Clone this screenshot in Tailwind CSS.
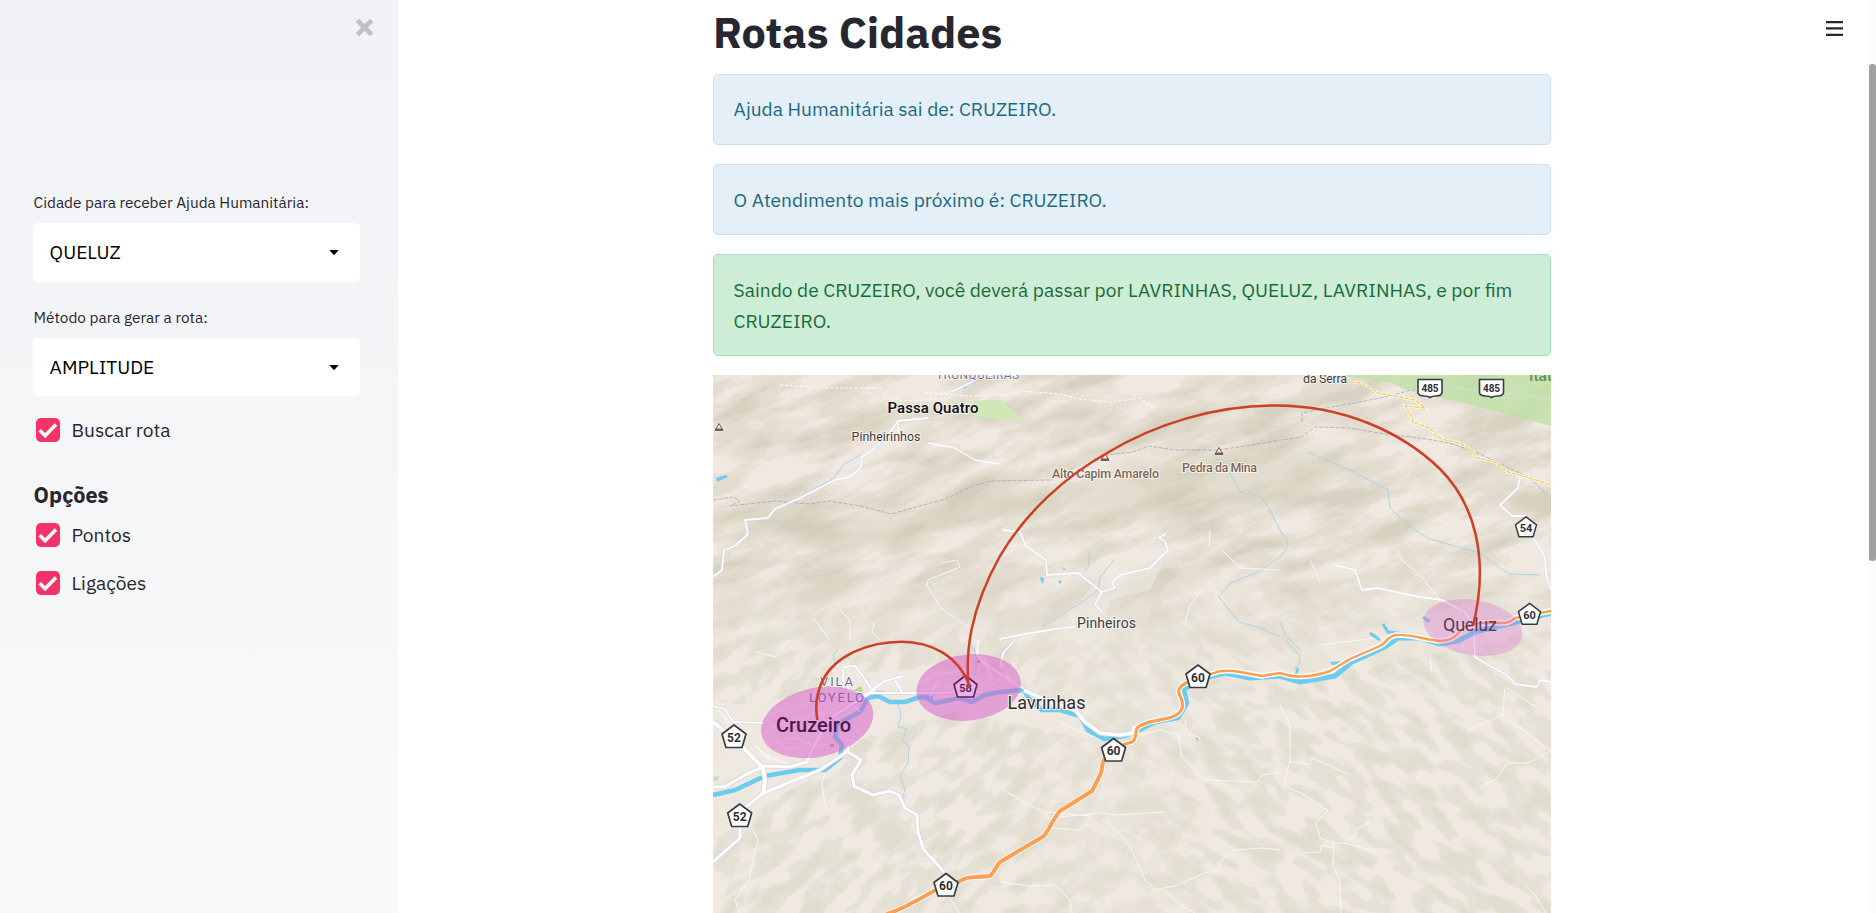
<!DOCTYPE html>
<html lang="pt-BR">
<head>
<meta charset="utf-8">
<title>Rotas Cidades</title>
<script src="https://cdn.jsdelivr.net/npm/@tailwindcss/browser@4"></script>
</head>
<body class="h-[913px] overflow-hidden bg-white font-['IBM_Plex_Sans',Roboto,sans-serif] text-[19.2px] leading-[30.72px] text-[#262730]">
<div class="flex h-full w-full">
  <aside class="relative flex h-full w-[398px] shrink-0 flex-col bg-linear-to-b from-[#f0f2f6] to-[#fafafa] pt-[190px] pr-[38px] pl-[33px]">
    <button class="absolute top-[18px] right-[24px]" aria-label="Fechar">
      <svg class="block size-[19px]" viewBox="0 0 19 19"><path d="M4 4 15 15M15 4 4 15" stroke="#bfc1c5" stroke-width="4.6" stroke-linecap="square"/></svg>
    </button>
    <label class="h-[33px] pl-[0.6px] text-[15.36px] leading-[25px]">Cidade para receber Ajuda Humanitária:</label>
    <div class="flex h-[59px] items-center justify-between rounded-[5px] bg-white pr-[21px] pl-[16.6px] text-black">
      <span>QUELUZ</span>
      <svg class="block h-[5px] w-[10px]" viewBox="0 0 10 5"><path d="M.3 0h9.4L6 4.3Q5 5.3 4 4.3Z"/></svg>
    </div>
    <label class="mt-[23px] h-[33px] pl-[0.6px] text-[15.36px] leading-[25px]">Método para gerar a rota:</label>
    <div class="flex h-[58px] items-center justify-between rounded-[5px] bg-white pr-[21px] pl-[16.6px] text-black">
      <span>AMPLITUDE</span>
      <svg class="block h-[5px] w-[10px]" viewBox="0 0 10 5"><path d="M.3 0h9.4L6 4.3Q5 5.3 4 4.3Z"/></svg>
    </div>
    <div class="mt-[22px] flex h-6 items-center gap-[11.5px] pl-[3px]">
      <svg class="block size-6 rounded-[5px] bg-[#f63366]" viewBox="0 0 24 24"><path d="m3.6 12.2 5.6 5.4L20 6.6" fill="none" stroke="#f4f5f8" stroke-width="3.6"/></svg>
      <span>Buscar rota</span>
    </div>
    <h3 class="mt-[37px] h-[44px] pl-[0.6px] text-[21.6px] font-bold leading-[32px]">Opções</h3>
    <div class="flex h-6 items-center gap-[11.5px] pl-[3px]">
      <svg class="block size-6 rounded-[5px] bg-[#f63366]" viewBox="0 0 24 24"><path d="m3.6 12.2 5.6 5.4L20 6.6" fill="none" stroke="#f4f5f8" stroke-width="3.6"/></svg>
      <span>Pontos</span>
    </div>
    <div class="mt-6 flex h-6 items-center gap-[11.5px] pl-[3px]">
      <svg class="block size-6 rounded-[5px] bg-[#f63366]" viewBox="0 0 24 24"><path d="m3.6 12.2 5.6 5.4L20 6.6" fill="none" stroke="#f4f5f8" stroke-width="3.6"/></svg>
      <span>Ligações</span>
    </div>
  </aside>

  <div class="flex h-full min-w-0 flex-1">
    <main class="flex flex-1 flex-col pl-[315px]">
      <h1 class="h-[74px] w-[838px] text-[43.2px] font-bold leading-[65px]">Rotas Cidades</h1>
      <div class="flex w-[838px] flex-col">
        <div class="mb-[19px] h-[71px] rounded-[5px] border border-[#cbe2f4] bg-[#e4eff8] px-[19.6px] pt-[19px] text-[#1c6983]">Ajuda Humanitária sai de: CRUZEIRO.</div>
        <div class="mb-[19px] h-[71px] rounded-[5px] border border-[#cbe2f4] bg-[#e4eff8] px-[19.6px] pt-[20px] text-[#1c6983]">O Atendimento mais próximo é: CRUZEIRO.</div>
        <div class="mb-[19px] h-[102px] rounded-[5px] border border-[#a5dfb9] bg-[#ceedd7] px-[19.6px] pt-[20px] text-[#176c36]">Saindo de CRUZEIRO, você deverá passar por LAVRINHAS, QUELUZ, LAVRINHAS, e por fim CRUZEIRO.</div>
        <svg class="block h-[538px] w-[838px] shrink-0 bg-[#efe9e1]" viewBox="713 375 838 538" font-family="Roboto, 'IBM Plex Sans', sans-serif">
          <defs>
            <filter id="reliefFar" x="0" y="0" width="1" height="1" color-interpolation-filters="sRGB">
              <feTurbulence type="fractalNoise" baseFrequency="0.013 0.042" numOctaves="4" seed="8"/>
              <feColorMatrix values="0 0 0 0 .80  0 0 0 0 .78  0 0 0 0 .70  1 0 0 0 0"/>
              <feComponentTransfer><feFuncA type="discrete" tableValues="0 0 0 0 0 0 0 0 .12 .24 .34 .4 .48 .6 .7 .7 .7 .7 .7 .7"/></feComponentTransfer>
            </filter>
            <filter id="reliefNear" x="0" y="0" width="1" height="1" color-interpolation-filters="sRGB">
              <feTurbulence type="fractalNoise" baseFrequency="0.03 0.062" numOctaves="2" seed="21"/>
              <feColorMatrix values="0 0 0 0 .81  0 0 0 0 .80  0 0 0 0 .72  1 0 0 0 0"/>
              <feComponentTransfer><feFuncA type="discrete" tableValues="0 0 0 0 0 0 0 0 0 .1 .27 .3 .34 .46 .46 .46 .46 .46 .46 .46"/></feComponentTransfer>
            </filter>
            <linearGradient id="fadeDown" x1="0" y1="375" x2="0" y2="913" gradientUnits="userSpaceOnUse">
              <stop offset="0" stop-color="#fff"/><stop offset=".35" stop-color="#fff"/><stop offset=".55" stop-color="#000"/>
            </linearGradient>
            <linearGradient id="fadeUp" x1="0" y1="375" x2="0" y2="913" gradientUnits="userSpaceOnUse">
              <stop offset=".33" stop-color="#000"/><stop offset=".55" stop-color="#fff"/>
            </linearGradient>
            <linearGradient id="fadeLeft" x1="0" y1="0" x2="1" y2="0"><stop offset=".35" stop-color="#000"/><stop offset=".6" stop-color="#fff"/></linearGradient>
            <linearGradient id="fadeRight" x1="0" y1="0" x2="1" y2="0"><stop offset=".35" stop-color="#fff"/><stop offset=".6" stop-color="#000"/></linearGradient>
            <mask id="far" maskUnits="userSpaceOnUse" x="713" y="375" width="838" height="538"><rect x="713" y="375" width="838" height="538" fill="url(#fadeDown)"/></mask>
            <mask id="near" maskUnits="userSpaceOnUse" x="713" y="375" width="838" height="538"><rect x="713" y="375" width="838" height="538" fill="url(#fadeUp)"/></mask>
            <mask id="west" maskUnits="userSpaceOnUse" x="713" y="375" width="838" height="538"><rect x="713" y="375" width="838" height="538" fill="url(#fadeRight)"/></mask>
            <mask id="east" maskUnits="userSpaceOnUse" x="713" y="375" width="838" height="538"><rect x="713" y="375" width="838" height="538" fill="url(#fadeLeft)"/></mask>
            <filter id="soft" x="-.3" y="-.3" width="1.6" height="1.6"><feGaussianBlur stdDeviation="7"/></filter>
            <path id="pentagon" d="M0-12 12-3 8 10.5H-8L-12-3Z" fill="#fff" stroke="#3a3b40" stroke-width="1.7" stroke-linejoin="round"/>
            <path id="plate" d="M-12-8.500H12V5Q11 8 6 8 2 8 0 9.500 -2 8-6 8-11 8-12 5Z" fill="#fff" stroke="#3a3b40" stroke-width="1.600" stroke-linejoin="round"/>
            <path id="peak" d="M0-3.500 4 3.500H-4Z" fill="#f6efe6" stroke="#7a5a48" stroke-width="1"/>
          </defs>

          <!-- terrain -->
          <g fill="#d2ccb6" opacity=".42" filter="url(#soft)">
            <path d="M713 510 760 507 890 514 960 485 1000 482 1080 495 1130 455 1190 470 1240 440 1310 450 1350 445 1330 490 1270 505 1200 500 1140 520 1060 510 990 515 900 545 830 545 780 530 713 530Z"/>
            <path d="M1410 455 1440 470 1430 495 1412 480Z"/>
          </g>
          <g mask="url(#far)"><g transform="rotate(-18 1132 500)"><rect x="640" y="150" width="990" height="750" filter="url(#reliefFar)"/></g></g>
          <g mask="url(#near)">
            <g mask="url(#west)"><g transform="rotate(-42 1000 780)"><rect x="500" y="400" width="950" height="800" filter="url(#reliefNear)"/></g></g>
            <g mask="url(#east)"><g transform="rotate(32 1330 780)"><rect x="850" y="350" width="950" height="850" filter="url(#reliefNear)"/></g></g>
          </g>
          <g fill="#efe9e1">
            <path d="M713 780 713 700 745 705 800 695 860 672 960 668 1010 690 1075 715 1090 740 1020 725 960 712 900 720 860 740 820 775 770 800 730 830 713 840Z" opacity=".85"/>
            <path d="M1070 610 1110 570 1150 545 1165 560 1150 590 1110 600 1100 640 1060 640Z" opacity=".6"/>
            <path d="M1330 640 1420 615 1500 595 1551 600 1551 630 1430 655 1300 680 1200 690Z" opacity=".5"/>
          </g>

          <!-- parks -->
          <path d="M1341 375H1551V426L1480 407 1410 391 1390 383Z" fill="#bfe0a6" opacity=".82"/>
          <path d="M974 401 1001 400 1021 418 998 419 974 417Z" fill="#cfe8b5"/>
          <path d="M854 690 861 686 863 691 855 695Z" fill="#a9dd8d"/>
          <path d="M713 777 719 776 718 780 713 781Z" fill="#c9dda8"/>

          <!-- borders -->
          <g fill="none" stroke="#9da0b5" stroke-width=".9" stroke-dasharray="4 1.500" opacity=".8">
            <path d="M713 500 733 497 740 501 730 506 775 501 808 504 830 501 860 506 891 514 945 499 975 485 991 481 1050 480 1075 467M1105 455 1133 452 1149 446 1175 450 1218 450 1245 446 1275 441 1302 437 1315 427 1350 428 1385 434 1420 438 1450 443 1480 454 1505 466 1530 478 1547 495"/>
            <path d="M1302 422V413L1320 409 1355 403 1385 397 1415 389"/>
          </g>
          <g fill="none" stroke="#fbf8f8" stroke-width="1.200" stroke-dasharray="3 2">
            <path d="M780 385 830 388 880 388 886 398 910 401 945 398M925 393 970 396 1003 395 1022 391 1060 394 1080 399 1110 402 1140 398 1155 410"/>
            <path d="M1410 390 1440 385 1480 391 1551 398" stroke="#d9dfe0"/>
          </g>

          <!-- streams -->
          <g fill="none" stroke="#a3d3e6" stroke-width=".9">
            <path d="M808 493 835 477 843 465 860 455"/>
            <path d="M1212 455 1225 465 1240 492 1262 497 1270 510 1281 532 1288 540 1286 550 1280 557 1258 572 1230 583 1219 597 1225 605 1239 622 1260 628 1280 637"/>
            <path d="M1308 452 1350 470 1388 490 1390 508 1410 527 1430 539 1480 553 1500 568 1510 574 1540 575"/>
            <path d="M1042 627 1065 613 1085 600 1098 590 1100 577 1114 560M1089 552 1089 566 1084 572"/>
            <path d="M898 704 901 715 898 727 907 729 903 740 909 747 908 763 900 775 905 790 902 800 907 795"/>
            <path d="M1286 641 1294 650 1300 655 1299 665 1295 668 1299 676"/>
            <path d="M838 649 833 655 836 668"/>
            <path d="M1280 622 1286 636 1300 650"/>
          </g>
          <g fill="#6ccbee">
            <path d="M716 478 726 475 728 477 717 482ZM962 385 967 387 964 389ZM1040 577 1044 578 1043 584 1041 581ZM1058 580 1062 581 1060 584ZM1062 567 1066 569 1064 570ZM1195 737 1198 738 1198 742Z"/>
            <path d="M1330 662 1342 661 1339 665 1332 665Z"/>
          </g>

          <!-- country lanes -->
          <g fill="none" stroke="#f9f7f5" stroke-width="1" stroke-linejoin="round">
            <path d="M927 585 928 580 945 573 960 567 957 560 942 563M927 585 941 608 975 632M875 622 872 632 880 640M813 618 830 640M840 610 850 620 850 640"/>
            <path d="M1003 790 1012 795 1030 806 1045 812 1049 818 1100 813 1116 815 1165 812M1102 818 1118 832 1132 850 1145 880 1155 890 1175 886 1205 873 1218 870 1220 862 1234 850 1262 848 1280 850M1165 889 1180 905 1195 913M1045 812 1090 816 1080 830 1050 828"/>
            <path d="M1000 882 1030 886 1055 885 1070 900 1072 913"/>
            <path d="M1060 722 1100 740M1185 720 1187 733 1200 738M1140 735 1160 730 1179 735 1181 755 1203 780 1258 782 1262 775 1280 772"/>
            <path d="M1280 705 1290 725 1290 760 1284 785 1305 795 1328 811 1316 823 1320 838 1334 843 1345 843 1356 835 1355 830 1370 822M1334 843 1333 865 1340 880 1341 913M1345 843 1378 852M1290 762 1310 764 1312 758 1350 775M1302 853 1320 852 1322 845 1334 848"/>
            <path d="M1505 687 1503 715 1480 725 1466 731M1507 688 1540 710M1510 720 1551 751 1528 763 1507 763 1498 778 1480 787M1524 883 1535 895 1546 913"/>
            <path d="M1430 655 1432 673M1383 637 1320 645M750 825 758 840 749 880 735 900 740 913M825 770 822 785 826 810"/>
            <path d="M1400 550 1397 556 1420 575 1440 600M1320 582 1310 560M1200 592 1190 605 1185 625M1210 530 1209 547M1222 550 1240 568 1280 570"/>
            <path d="M755 652 775 657 790 640M910 900 940 885 960 913"/>
          </g>

          <!-- yellow road -->
          <path d="M1350 382 1362 383 1378 393 1400 397 1415 400 1425 408 1405 406 1413 418 1412 422 1430 428 1436 436 1445 440 1460 443 1474 452 1474 457 1495 462 1508 472 1530 478 1551 485" fill="none" stroke="#fff" stroke-width="2.600"/>
          <path d="M1350 382 1362 383 1378 393 1400 397 1415 400 1425 408 1405 406 1413 418 1412 422 1430 428 1436 436 1445 440 1460 443 1474 452 1474 457 1495 462 1508 472 1530 478 1551 485" fill="none" stroke="#f6cc5c" stroke-width="1.400" stroke-dasharray="5 .8" stroke-linejoin="round"/>

          <!-- white roads -->
          <g fill="none" stroke-linejoin="round" stroke-linecap="round">
            <g stroke="#d3d3e4" stroke-width="2.600">
              <path d="M713 577 722 570 724 550 735 546 748 534 745 520 768 518 775 509 800 498 835 480 850 477 861 467 862 457 875 448 890 432 898 421 928 418M950 392 960 388 975 380"/>
              <path d="M1003 530 1020 532 1026 546 1046 560 1047 575 1078 573 1102 592 1095 604 1102 612M1000 639 1020 635 1055 629 1075 627M1102 592 1115 588 1112 583 1120 575 1150 568 1168 550 1165 541 1159 538 1165 534"/>
              <path d="M1334 565 1355 570 1362 590 1378 588 1400 593 1420 597 1442 600 1465 612 1474 625"/>
              <path d="M1520 477 1518 488 1500 505 1512 516 1525 516 1530 532 1545 557 1546 575 1551 590"/>
              <path d="M1474 632 1475 657 1490 666 1507 675 1515 684 1537 687 1540 680 1551 682"/>
              <path d="M1000 655 1003 650 1013 642"/>
            </g>
            <g stroke="#fdfdff" stroke-width="1.800">
              <path d="M713 577 722 570 724 550 735 546 748 534 745 520 768 518 775 509 800 498 835 480 850 477 861 467 862 457 875 448 890 432 898 421 928 418M950 392 960 388 975 380"/>
              <path d="M898 421V432M928 443 955 448 975 460 1000 464" stroke-width="1.300"/>
              <path d="M1003 530 1020 532 1026 546 1046 560 1047 575 1078 573 1102 592 1095 604 1102 612M1000 639 1020 635 1055 629 1075 627M1102 592 1115 588 1112 583 1120 575 1150 568 1168 550 1165 541 1159 538 1165 534"/>
              <path d="M1334 565 1355 570 1362 590 1378 588 1400 593 1420 597 1442 600 1465 612 1474 625"/>
              <path d="M1520 477 1518 488 1500 505 1512 516 1525 516 1530 532 1545 557 1546 575 1551 590"/>
              <path d="M1474 632 1475 657 1490 666 1507 675 1515 684 1537 687 1540 680 1551 682"/>
            </g>
          </g>

          <!-- rivers -->
          <g fill="none" stroke="#6ccbee" stroke-linejoin="round">
            <path d="M713 795 735 790 765 776 800 770 825 770 840 758 842 745 835 737 837 724 860 712 868 698 878 696 890 702 905 702 920 697 933 698" stroke-width="4.500"/>
            <path d="M925 697 935 703 960 698 972 702 985 695 1000 692 1024 690 1030 700 1042 710 1060 710 1080 716 1088 730 1104 739 1125 736 1140 730 1155 722 1178 718 1187 703 1184 690 1192 684" stroke-width="4.500"/>
            <path d="M1208 677 1225 673 1250 678 1280 676 1300 682 1335 676 1352 662 1385 647 1398 638 1420 638 1440 644 1458 641 1475 632 1500 626 1525 620 1551 613" stroke-width="5"/>
            <path d="M1392 640 1406 634 1388 632 1383 624M1380 640 1370 633M1423 617 1428 621 1430 620" stroke-width="3"/>
            <path d="M1296 675 1298 668" stroke-width="2.500"/>
          </g>

          <!-- town streets -->
          <g fill="none" stroke="#fdfbff" stroke-width="1.100" opacity=".9">
            <path d="M765 715 800 706 840 694M768 730 790 720 830 712 850 700M765 742 795 738 820 748M775 750 830 744M785 722 798 738M800 715 812 732M815 708 828 724M770 735 790 752M830 712 848 728M845 697 860 712M755 745 770 760M766 755 790 765M725 716 735 730M719 710 728 724M840 738 858 742"/>
            <path d="M920 683 935 675 970 668M930 697 938 680M970 660 968 690M985 658 992 684M920 690 960 684M1000 660 1010 680"/>
          </g>
          <g fill="none" stroke-linejoin="round">
            <g stroke="#d3d3e4">
              <path d="M843 670V680L850 691 868 695M843 667 855 666 862 675 872 690 885 681 903 676M868 693 920 693 980 692M873 692 885 692M895 680 902 692" stroke-width="3.200"/>
              <path d="M848 745 848 752 861 760 852 775 854 786 873 795 890 791 899 795 905 808 917 815 918 833 924 850 944 872" stroke-width="4.500"/>
              <path d="M713 706 725 709 733 722 765 723" stroke-width="3"/>
              <path d="M713 787H725L745 775 765 766 790 767 807 762 812 750 830 718 862 698 875 689" stroke-width="4.500"/>
              <path d="M848 751 820 770 790 782 762 794 740 812V838L713 862" stroke-width="4.500"/>
              <path d="M713 722 738 742 763 768 765 780 763 794" stroke-width="5.500"/>
              <path d="M1024 690 1045 700 1075 710 1085 722 1100 733 1120 735 1133 733 1134 726" stroke-width="5"/>
              <path d="M968 640 977 655 975 675" stroke-width="2.500"/>
            </g>
            <g stroke="#fff">
              <path d="M843 670V680L850 691 868 695M843 667 855 666 862 675 872 690 885 681 903 676M868 693 920 693 980 692M895 680 902 692" stroke-width="2.200"/>
              <path d="M848 745 848 752 861 760 852 775 854 786 873 795 890 791 899 795 905 808 917 815 918 833 924 850 944 872" stroke-width="3"/>
              <path d="M713 706 725 709 733 722 765 723" stroke-width="1.800"/>
              <path d="M713 787H725L745 775 765 766 790 767 807 762 812 750 830 718 862 698 875 689" stroke-width="3.200"/>
              <path d="M848 751 820 770 790 782 762 794 740 812V838L713 862" stroke-width="3"/>
              <path d="M713 722 738 742 763 768 765 780 763 794" stroke-width="4"/>
              <path d="M1024 690 1045 700 1075 710 1085 722 1100 733 1120 735 1133 733 1134 726" stroke-width="3.600"/>
              <path d="M978 640 977 655 985 664 1024 689" stroke-width="1.600"/>
              <path d="M1003 654 1000 668M1002 654 1014 641" stroke-width="1.500"/>
            </g>
          </g>
          <path d="M830 744h4v3h-4ZM977 660h3v3h-3Z" fill="#b8a79a"/>

          <!-- orange highway -->
          <g fill="none" stroke-linejoin="round" stroke-linecap="round">
            <path d="M887 914 C905 908 918 900 930 893S950 887 960 881 978 878 990 876C994 873 996 866 1000 862L1044 836C1050 828 1053 819 1060 811L1092 791 1101 773C1104 760 1100 764 1113 748L1132 742C1138 738 1134 731 1138 727 1148 720 1160 721 1172 717 1183 713 1184 706 1181 698 1176 690 1180 686 1186 683L1198 678 1214 673Q1223 669 1240 672L1262 676 1280 673Q1302 681 1330 671L1350 659 1380 646C1388 642 1386 637 1396 635 1412 634 1425 640 1440 641 1460 640 1458 628 1468 626L1480 623H1505Q1511 622 1515 618L1530 615 1551 611" stroke="#fff" stroke-width="5.500"/>
            <path d="M887 914 C905 908 918 900 930 893S950 887 960 881 978 878 990 876C994 873 996 866 1000 862L1044 836C1050 828 1053 819 1060 811L1092 791 1101 773C1104 760 1100 764 1113 748" stroke="#fc9f52" stroke-width="4"/>
            <path d="M1113 748 1132 742C1138 738 1134 731 1138 727 1148 720 1160 721 1172 717 1183 713 1184 706 1181 698 1176 690 1180 686 1186 683L1198 678" stroke="#fc9f52" stroke-width="3.200"/>
            <path d="M1198 678 1214 673Q1223 669 1240 672L1262 676 1280 673Q1302 681 1330 671L1350 659 1380 646C1388 642 1386 637 1396 635 1412 634 1425 640 1440 641 1460 640 1458 628 1468 626L1480 623H1505Q1511 622 1515 618L1530 615 1551 611" stroke="#fc9f52" stroke-width="2.400"/>
          </g>

          <!-- city points -->
          <ellipse cx="817.200" cy="722.300" rx="57" ry="34.500" transform="rotate(-13 817.200 722.300)" fill="#d95dc9" opacity=".52"/>
          <ellipse cx="968.700" cy="687.500" rx="52.500" ry="33" transform="rotate(-7 968.700 687.500)" fill="#d95dc9" opacity=".52"/>
          <ellipse cx="1473" cy="627.500" rx="50" ry="27.500" transform="rotate(10 1473 627.500)" fill="#dc6fd0" opacity=".34"/>

          <!-- place names -->
          <g stroke="#f7f3ec" stroke-width="2" stroke-linejoin="round" paint-order="stroke">
            <text x="936" y="379" font-size="12" fill="#7079a0" textLength="83">TRUNQUEIRAS</text>
            <text x="820" y="686" font-size="13" fill="#6b7396" textLength="33">VILA</text>
            <text x="809" y="702" font-size="13" fill="#8d62ad" stroke="none" textLength="55">LOYELO</text>
            <g fill="#3c3d42" font-size="12.500">
              <text x="851.500" y="440.500" textLength="69">Pinheirinhos</text>
              <text x="1303" y="382.500" textLength="44">da Serra</text>
              <text x="1077" y="628" font-size="14" textLength="59">Pinheiros</text>
            </g>
            <text x="887.500" y="413" font-size="15" font-weight="600" fill="#16171a" textLength="91">Passa Quatro</text>
            <g fill="#7d6659" font-size="12.500" font-weight="500">
              <text x="1052" y="478" textLength="107">Alto Capim Amarelo</text>
              <text x="1182" y="472" textLength="75">Pedra da Mina</text>
            </g>
            <text x="1529" y="380.500" font-size="15.500" fill="#5c9350" stroke="#c5e2b0" font-weight="500">Itatiaia</text>
            <text x="1007.500" y="709" font-size="18" fill="#2c2d32" textLength="78">Lavrinhas</text>
            <g stroke="none">
              <text x="776" y="732" font-size="20" font-weight="500" fill="#4a1a4c" textLength="75">Cruzeiro</text>
              <text x="1443" y="631" font-size="18" fill="#553a57" textLength="54">Queluz</text>
            </g>
          </g>
          <g>
            <use href="#peak" x="719" y="427"/><use href="#peak" x="1105" y="457"/><use href="#peak" x="1219" y="451"/>
            <g fill="#7a5a48"><path d="M715 428.500H723V431H715ZM1101 458.500H1109V461H1101ZM1215 452.500H1223V455H1215Z"/></g>
          </g>

          <!-- road shields -->
          <g>
            <use href="#plate" x="1430" y="388"/><use href="#plate" x="1491.500" y="388"/>
            <use href="#pentagon" x="734" y="737"/><use href="#pentagon" x="739.700" y="816"/>
            <use href="#pentagon" x="946" y="885.500"/><use href="#pentagon" x="1113.600" y="750.500"/>
            <use href="#pentagon" x="1198" y="677"/>
            <path d="M965.500 675.500 977 684.500 973.500 697H957.500L954 684.500Z" fill="#eab2e4" stroke="#5c1f5f" stroke-width="1.600" stroke-linejoin="round"/>
            <use href="#pentagon" transform="translate(1526 527.500) scale(.88)"/><use href="#pentagon" transform="translate(1529.500 614.500) scale(.92)"/>
          </g>
          <g fill="#2e2f34" font-size="12" font-weight="700" text-anchor="middle">
            <text x="1430" y="391.500" font-size="10">485</text><text x="1491.500" y="391.500" font-size="10">485</text>
            <text x="734" y="741.500">52</text><text x="739.700" y="820.500">52</text><text x="946" y="890">60</text>
            <text x="1113.600" y="755">60</text><text x="1198" y="681.500">60</text><text x="965.500" y="691.500" font-size="11" fill="#5c1f5f">58</text>
            <text x="1526" y="531.500" font-size="11">54</text><text x="1529.500" y="618.500" font-size="11">60</text>
          </g>

          <!-- route arcs -->
          <g fill="none" stroke="#cf3f26" stroke-width="2.500">
            <path d="M817.300 720C815 706.500 816 693 823.300 679.300 835 657 866 641.700 901.700 641.700 930 641.700 958 655 969.300 685.500"/>
            <path d="M968.800 688C965 652 970 610 1000 556 1026 512 1066 476 1107 453 1155 424 1215 405.500 1275 405.500 1345 405.500 1403 433 1440 469 1474 503 1490 557 1473 626"/>
          </g>
        </svg>
      </div>
    </main>
    <svg class="mt-[20px] mr-[23px] block h-[18px] w-[17px] shrink-0" viewBox="0 0 17 18"><path d="M0 1h17v2.200H0ZM0 7.300h17v2.200H0ZM0 13.800h17v2.200H0Z" fill="#262730"/></svg>
    <div class="flex h-full w-[10px] shrink-0 justify-end bg-[#fcfcfc] pt-16"><div class="h-[497px] w-[7px] rounded-[3px] bg-[#a1a1a1]"></div></div>
  </div>
</div>
</body>
</html>
